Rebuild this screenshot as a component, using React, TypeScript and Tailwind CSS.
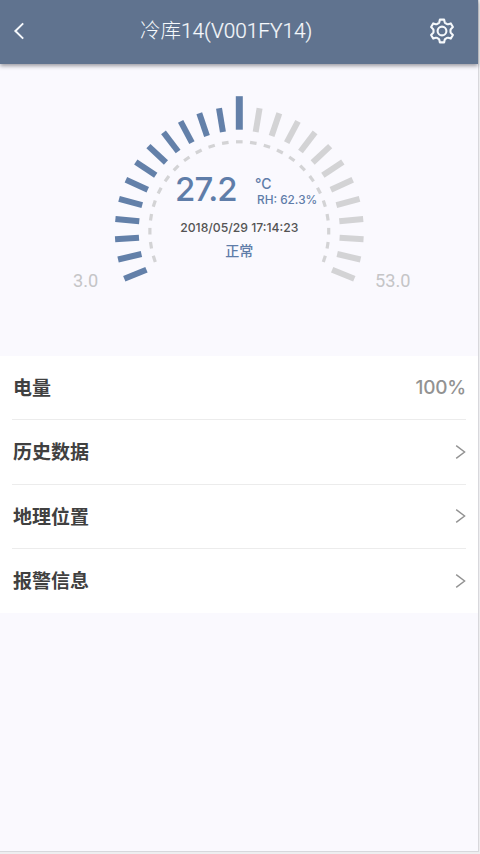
interface Row {
  label: string;
  value?: string;
}

const ROWS: Row[] = [
  { label: "电量", value: "100%" },
  { label: "历史数据" },
  { label: "地理位置" },
  { label: "报警信息" },
];

const CX = 239.3;
const CY = 167.2;
const TICKS = Array.from({ length: 25 }, (_, i) => i - 12);

function Header() {
  return (
    <header className="relative z-10 grid h-[64px] shrink-0 grid-cols-[127px_1fr_101px] items-center bg-[#60738f] pr-[23px] pl-[13px] text-[#f6f9fc] shadow-[0_2px_4px_rgba(40,40,50,0.45)]">
      <svg width="28" height="20" viewBox="0 0 28 20" fill="none" className="-mt-[2px]">
        <path d="M10.2 2.4 2.4 10l7.8 7.6" stroke="currentColor" strokeWidth="2" />
      </svg>
      <h1 className="-mt-px flex items-center font-['Roboto','Noto_Sans_CJK_SC',sans-serif] leading-none font-light whitespace-nowrap">
        <span className="text-[20.5px]">冷库</span>
        <span className="text-[20.8px] [-webkit-text-stroke:0.2px_#f6f9fc]">14(V001FY14)</span>
      </h1>
      <svg
        width="26"
        height="28"
        viewBox="0 0 26 28"
        fill="none"
        stroke="currentColor"
        strokeWidth="2.1"
        strokeLinejoin="round"
        className="-mt-[3px] justify-self-end"
      >
        <path d="M10.9 2.6h4.2l.6 2.6q.2.7.8 1l1.500.9q.6.3 1.300.1l2.500-.8 2.100 3.700-1.900 1.800q-.5.5-.5 1.100v2q0 .6.5 1.100l1.900 1.800-2.100 3.700-2.500-.8q-.7-.2-1.300.1l-1.500.9q-.6.3-.8 1l-.6 2.600h-4.200l-.6-2.600q-.2-.7-.8-1L8 20.900q-.6-.3-1.300-.1l-2.500.8-2.100-3.700L4 16.100q.5-.5.5-1.100v-2q0-.6-.5-1.100l-1.900-1.800 2.100-3.700 2.500.8q.7.2 1.300-.1l1.500-.9q.6-.3.8-1z" />
        <circle cx="13" cy="14" r="4.4" />
      </svg>
    </header>
  );
}

function Gauge() {
  return (
    <svg
      width="478"
      height="292"
      viewBox="0 0 478 292"
      className="shrink-0 font-['Inter','Noto_Sans_CJK_SC',sans-serif]"
    >
      {TICKS.map((n) => (
        <g key={n}>
          <rect
            x={CX - (n === 0 ? 3.5 : 3)}
            y={CY - (n === 0 ? 135 : 124.5)}
            width={n === 0 ? 7 : 6}
            height={n === 0 ? 33.5 : 24}
            fill={n <= 0 ? "#6380a9" : "#d3d3d5"}
            transform={`rotate(${n * 9.375} ${CX} ${CY})`}
          />
          <rect
            x={CX - 3.3}
            y={CY - 91}
            width={6.6}
            height={3.2}
            fill="#d3d3d5"
            transform={`rotate(${n * 9} ${CX} ${CY})`}
          />
        </g>
      ))}
      <text x="175" y="137.3" fontSize="33" letterSpacing="-0.9" fontWeight="500" fill="#5f7da9">
        27.2
      </text>
      <text x="255" y="124.5" fontSize="14" fontWeight="500" fill="#5f7da9">
        °C
      </text>
      <text x="257" y="139.8" fontSize="11.8" fontWeight="500" fill="#5f7da9">
        RH: 62.3%
      </text>
      <text x="239.3" y="167.8" fontSize="12.2" fontWeight="500" textAnchor="middle" fill="#545454">
        2018/05/29 17:14:23
      </text>
      <text x="239.3" y="191.8" fontSize="14" fontWeight="500" textAnchor="middle" fill="#5f7da9">
        正常
      </text>
      <g fontSize="18.2" fill="#c5c5c7" className="font-['Roboto',sans-serif]">
        <text x="73" y="222.8">
          3.0
        </text>
        <text x="375" y="222.8">
          53.0
        </text>
      </g>
    </svg>
  );
}

function ListRow({ label, value }: Row) {
  return (
    <li className="flex h-[64.25px] items-center justify-between border-b border-[#ececec] last:border-b-0">
      <span className="-mt-[2px] ml-px font-['Noto_Sans_CJK_SC',sans-serif] text-[19px] leading-none font-bold text-[#404040]">
        {label}
      </span>
      {value ? (
        <span className="font-['Inter',sans-serif] text-[19px] leading-none font-medium tracking-[-0.2px] text-[#929292]">
          {value}
        </span>
      ) : (
        <svg width="11" height="16" viewBox="0 0 11 16" fill="none">
          <path d="M1.2 1.6 9.6 8l-8.4 6.4" stroke="#929292" strokeWidth="1.4" />
        </svg>
      )}
    </li>
  );
}

export default function App() {
  return (
    <div className="h-[854px] w-[480px] overflow-hidden bg-[#eeeef0]">
      <div className="flex h-[852px] w-[479px] flex-col border-r border-b border-[#d8d8dc] bg-[#faf9fe]">
        <Header />
        <Gauge />
        <ul className="bg-white px-[12px]">
          {ROWS.map((row) => (
            <ListRow key={row.label} {...row} />
          ))}
        </ul>
      </div>
    </div>
  );
}
